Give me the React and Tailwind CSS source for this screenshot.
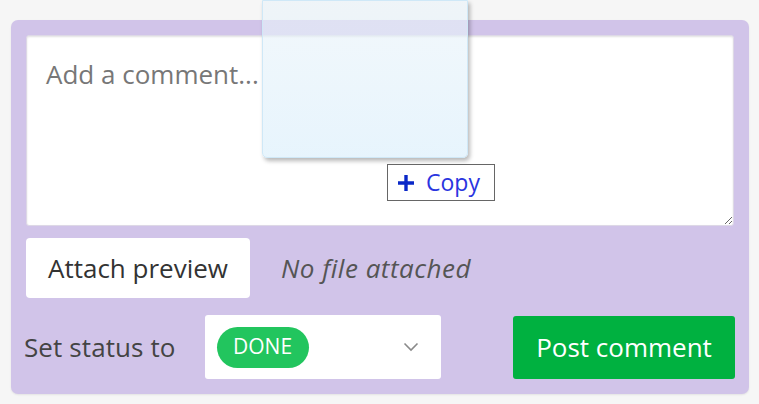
import React from "react";

export default function App() {
  return (
    <div
      className="relative w-[759px] h-[404px] overflow-hidden bg-[#f6f6f6] pt-[20px] pl-[11px] pr-[10px]"
      style={{ fontFamily: '"Open Sans", "Noto Sans", sans-serif' }}
    >
      <div className="flex h-[374px] flex-col rounded-[7px] bg-[#d1c4e9] p-[15px] shadow-[0_1px_2px_rgba(0,0,0,0.08)]">
        <textarea
          className="block h-[191px] w-full rounded-[3px] border border-[#ddd8e6] bg-white pl-[19px] pt-[19px] text-[26px] text-[#333] shadow-[inset_0_1px_2px_rgba(0,0,0,0.12)] outline-none placeholder:text-[#777]"
          placeholder="Add a comment..."
        />
        <div className="mt-[12px] flex items-center gap-[31px]">
          <button className="h-[60px] w-[224px] rounded-[4px] bg-white text-[26px] text-[#333]">
            Attach preview
          </button>
          <span className="text-[26px] italic tracking-[0.5px] text-[#555]">No file attached</span>
        </div>
        <div className="mt-[17px] flex items-center justify-between">
          <div className="flex items-center">
            <span className="ml-[-2px] text-[26px] tracking-[0.1px] text-[#444]">Set status to</span>
            <div className="ml-[29px] flex h-[64px] w-[236px] items-center justify-between rounded-[3px] bg-white pl-[12px] pr-[22px]">
              <span className="flex h-[41px] w-[92px] items-center justify-center rounded-full bg-[#22c55e] text-[21px] text-white">
                DONE
              </span>
              <svg width="16" height="10" viewBox="0 0 16 10" fill="none">
                <path d="M1.5 1.5 L8 8 L14.5 1.5" stroke="#8a8a8a" strokeWidth="1.6" />
              </svg>
            </div>
          </div>
          <button className="mr-[-1px] h-[63px] w-[222px] rounded-[3px] bg-[#00b140] text-[26px] text-white">
            Post comment
          </button>
        </div>
      </div>

      <div className="absolute left-[262px] top-0 h-[158px] w-[206px] rounded-b-[5px] border border-[#cfe8f7] bg-gradient-to-b from-[#eaf3f9]/60 to-[#dff1fc]/75 shadow-[2px_3px_4px_rgba(0,0,0,0.28)]" />

      <div className="absolute left-[387px] top-[164px] flex h-[37px] w-[108px] items-center gap-[11px] border border-[#666] bg-white pl-[9px]">
        <svg width="18" height="18" viewBox="0 0 18 18">
          <path d="M9 1 V17 M1 9 H17" stroke="#0a28c8" strokeWidth="3.4" />
        </svg>
        <span className="text-[23px] leading-none text-[#2a35e0]">Copy</span>
      </div>
    </div>
  );
}
